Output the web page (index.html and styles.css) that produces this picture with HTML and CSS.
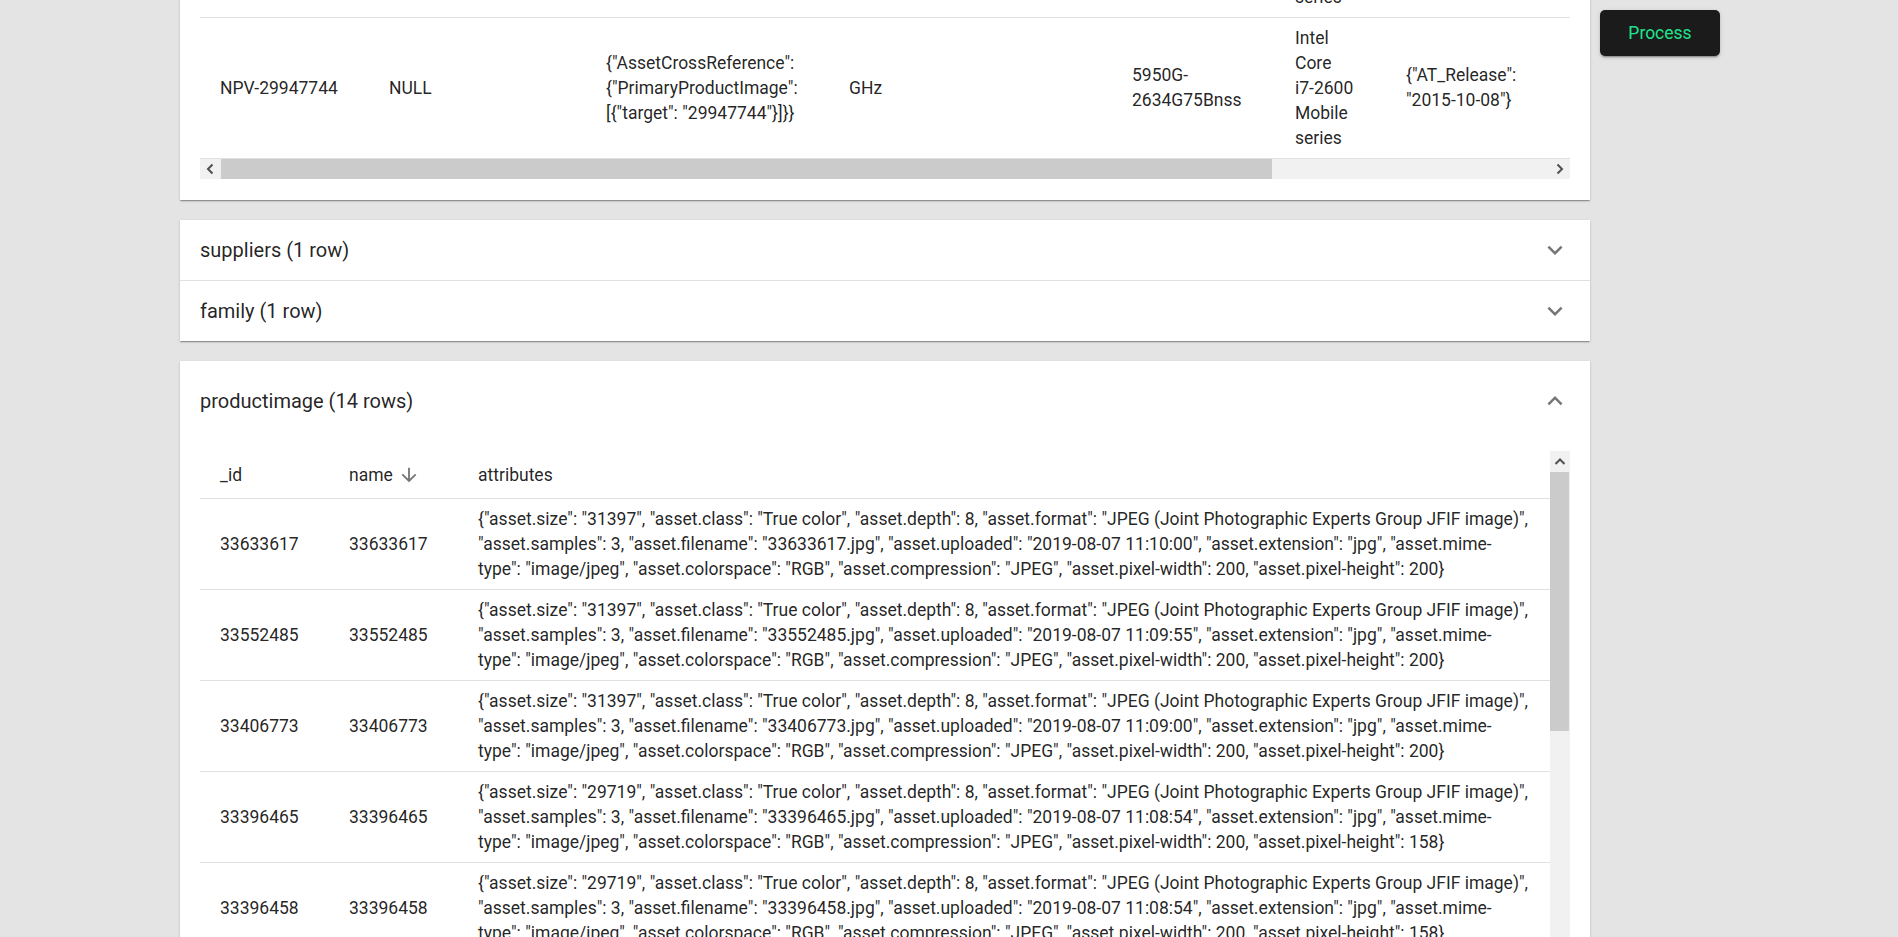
FILE: index.html
```html
<!DOCTYPE html>
<html lang="en">
<head>
<meta charset="utf-8">
<title>Import preview</title>
<link rel="stylesheet" href="styles.css">
</head>
<body>
<div class="page">
  <main class="main">
    <section class="card card-first">
      <div class="hwrap">
        <table class="wide">
          <colgroup>
            <col class="w1"><col class="w2"><col class="w3"><col class="w4"><col class="w5"><col class="w6"><col class="w7"><col class="w8">
          </colgroup>
          <tbody>
            <tr>
              <td></td>
              <td></td>
              <td></td>
              <td></td>
              <td></td>
              <td>Intel Core <span class="nb">i7-2600</span> Mobile series</td>
              <td></td>
              <td></td>
            </tr>
            <tr>
              <td>NPV-29947744</td>
              <td>NULL</td>
              <td>{"AssetCrossReference": {"PrimaryProductImage": [{"target": "29947744"}]}}</td>
              <td>GHz</td>
              <td>5950G-2634G75Bnss</td>
              <td>Intel Core <span class="nb">i7-2600</span> Mobile series</td>
              <td>{"AT_Release": "2015-10-08"}</td>
              <td></td>
            </tr>
          </tbody>
        </table>
      </div>
      <div class="hscroll">
        <div class="sb-btn"><svg width="21" height="20" viewBox="0 0 21 20"><polyline points="12.5,5.5 8,10 12.5,14.5" fill="none" stroke="#505050" stroke-width="2"/></svg></div>
        <div class="hs-thumb"></div>
        <div class="hs-rest"></div>
        <div class="sb-btn"><svg width="21" height="20" viewBox="0 0 21 20"><polyline points="8.5,5.5 13,10 8.5,14.5" fill="none" stroke="#505050" stroke-width="2"/></svg></div>
      </div>
    </section>

    <section class="card">
      <div class="panel">
        <span class="ptitle">suppliers (1 row)</span>
        <svg class="chev" viewBox="0 0 24 24"><path d="M16.59 8.59L12 13.17 7.41 8.59 6 10l6 6 6-6z"/></svg>
      </div>
      <div class="panel panel-divided">
        <span class="ptitle">family (1 row)</span>
        <svg class="chev" viewBox="0 0 24 24"><path d="M16.59 8.59L12 13.17 7.41 8.59 6 10l6 6 6-6z"/></svg>
      </div>
    </section>

    <section class="card">
      <div class="panel panel-open">
        <span class="ptitle">productimage (14 rows)</span>
        <svg class="chev" viewBox="0 0 24 24"><path d="M12 8l-6 6 1.41 1.41L12 10.83l4.59 4.58L18 14z"/></svg>
      </div>
      <div class="details">
        <div class="vwrap">
          <table class="imgs">
            <colgroup><col class="i1"><col class="i2"><col></colgroup>
            <thead>
              <tr>
                <th>_id</th>
                <th><span class="sort">name<svg class="arrow" viewBox="0 0 24 24"><path d="M20 12l-1.41-1.410L13 16.17V4h-2v12.17l-5.58-5.59L4 12l8 8 8-8z"/></svg></span></th>
                <th>attributes</th>
              </tr>
            </thead>
            <tbody>
              <tr>
                <td>33633617</td><td>33633617</td>
                <td class="attr">{"asset.size": "31397", "asset.class": "True color", "asset.depth": 8, "asset.format": "JPEG (Joint Photographic Experts Group JFIF image)", "asset.samples": 3, "asset.filename": "33633617.jpg", "asset.uploaded": "2019-08-07 11:10:00", "asset.extension": "jpg", "asset.mime-type": "image/jpeg", "asset.colorspace": "RGB", "asset.compression": "JPEG", "asset.pixel-width": 200, "asset.pixel-height": 200}</td>
              </tr>
              <tr>
                <td>33552485</td><td>33552485</td>
                <td class="attr">{"asset.size": "31397", "asset.class": "True color", "asset.depth": 8, "asset.format": "JPEG (Joint Photographic Experts Group JFIF image)", "asset.samples": 3, "asset.filename": "33552485.jpg", "asset.uploaded": "2019-08-07 11:09:55", "asset.extension": "jpg", "asset.mime-type": "image/jpeg", "asset.colorspace": "RGB", "asset.compression": "JPEG", "asset.pixel-width": 200, "asset.pixel-height": 200}</td>
              </tr>
              <tr>
                <td>33406773</td><td>33406773</td>
                <td class="attr">{"asset.size": "31397", "asset.class": "True color", "asset.depth": 8, "asset.format": "JPEG (Joint Photographic Experts Group JFIF image)", "asset.samples": 3, "asset.filename": "33406773.jpg", "asset.uploaded": "2019-08-07 11:09:00", "asset.extension": "jpg", "asset.mime-type": "image/jpeg", "asset.colorspace": "RGB", "asset.compression": "JPEG", "asset.pixel-width": 200, "asset.pixel-height": 200}</td>
              </tr>
              <tr>
                <td>33396465</td><td>33396465</td>
                <td class="attr">{"asset.size": "29719", "asset.class": "True color", "asset.depth": 8, "asset.format": "JPEG (Joint Photographic Experts Group JFIF image)", "asset.samples": 3, "asset.filename": "33396465.jpg", "asset.uploaded": "2019-08-07 11:08:54", "asset.extension": "jpg", "asset.mime-type": "image/jpeg", "asset.colorspace": "RGB", "asset.compression": "JPEG", "asset.pixel-width": 200, "asset.pixel-height": 158}</td>
              </tr>
              <tr>
                <td>33396458</td><td>33396458</td>
                <td class="attr">{"asset.size": "29719", "asset.class": "True color", "asset.depth": 8, "asset.format": "JPEG (Joint Photographic Experts Group JFIF image)", "asset.samples": 3, "asset.filename": "33396458.jpg", "asset.uploaded": "2019-08-07 11:08:54", "asset.extension": "jpg", "asset.mime-type": "image/jpeg", "asset.colorspace": "RGB", "asset.compression": "JPEG", "asset.pixel-width": 200, "asset.pixel-height": 158}</td>
              </tr>
            </tbody>
          </table>
          <div class="vscroll">
            <div class="sb-btn vbtn"><svg width="20" height="21" viewBox="0 0 20 21"><polyline points="5.5,13 10,8.5 14.5,13" fill="none" stroke="#505050" stroke-width="2"/></svg></div>
            <div class="vs-thumb"></div>
          </div>
        </div>
      </div>
    </section>
  </main>
  <aside class="side">
    <button class="process" type="button">Process</button>
  </aside>
</div>
</body>
</html>
```

FILE: styles.css
```css
html, body {
  margin: 0;
  padding: 0;
  overflow: hidden;
  background: #e4e4e4;
}

body {
  font-family: Roboto, "Liberation Sans", sans-serif;
  color: rgba(0, 0, 0, 0.87);
}

.page {
  display: flex;
  align-items: flex-start;
  gap: 10px;
  padding-left: 180px;
}

.main {
  width: 1410px;
  display: flex;
  flex-direction: column;
  gap: 20px;
}

.card {
  background: #fff;
  box-shadow: 0 2px 1px -1px rgba(0, 0, 0, 0.2), 0 1px 1px 0 rgba(0, 0, 0, 0.14), 0 1px 3px 0 rgba(0, 0, 0, 0.12);
}

.card-first {
  margin-top: -123px;
  padding: 0 20px 21px;
}

.hwrap {
  overflow: hidden;
}

table {
  border-collapse: collapse;
  table-layout: fixed;
}

td, th {
  font-size: 17.5px;
  line-height: 25px;
  font-weight: 400;
  text-align: left;
  vertical-align: middle;
  padding: 7.5px 30px 7.5px 20px;
  border-bottom: 1px solid #e0e0e0;
}

.nb {
  white-space: nowrap;
}

.wide {
  width: 1733px;
}

.w1 { width: 169px; }
.w2 { width: 217px; }
.w3 { width: 243px; }
.w4 { width: 283px; }
.w5 { width: 163px; }
.w6 { width: 111px; }
.w7 { width: 180px; }
.w8 { width: 367px; }

.hscroll {
  display: flex;
  height: 20px;
  background: #f1f1f1;
}

.sb-btn {
  width: 21px;
  flex: none;
  display: flex;
  align-items: center;
  justify-content: center;
}

.hs-thumb {
  width: 1051px;
  background: #cbcbcb;
}

.hs-rest {
  flex: 1;
}

.panel {
  height: 60px;
  padding: 0 20px;
  display: flex;
  align-items: center;
  justify-content: space-between;
}

.panel-divided {
  border-top: 1px solid #e0e0e0;
}

.panel-open {
  height: 80px;
}

.ptitle {
  font-size: 20px;
  line-height: 30px;
}

.chev {
  width: 30px;
  height: 30px;
  fill: rgba(0, 0, 0, 0.54);
}

.details {
  padding: 10px 20px 0;
}

.vwrap {
  display: flex;
  align-items: stretch;
}

.imgs {
  flex: 1;
  width: 1350px;
}

.i1 { width: 129px; }
.i2 { width: 129px; }

.imgs th {
  line-height: 30px;
  padding-top: 9px;
  padding-bottom: 8px;
}

.sort {
  display: inline-flex;
  align-items: center;
}

.arrow {
  width: 22px;
  height: 22px;
  margin-left: 5px;
  fill: rgba(0, 0, 0, 0.54);
}

.imgs td.attr {
  padding-right: 16px;
}

.vscroll {
  width: 20px;
  flex: none;
  background: #f1f1f1;
  display: flex;
  flex-direction: column;
}

.vbtn {
  width: 20px;
  height: 21px;
}

.vs-thumb {
  height: 259px;
  margin-right: 1px;
  background: #cbcbcb;
}

.side {
  padding-top: 10px;
}

.process {
  width: 120px;
  height: 46px;
  border: none;
  border-radius: 5px;
  background: #1b1b1b;
  color: #20e38d;
  font-family: Roboto, "Liberation Sans", sans-serif;
  font-size: 17.5px;
  box-shadow: 0 3px 1px -2px rgba(0, 0, 0, 0.2), 0 2px 2px 0 rgba(0, 0, 0, 0.14), 0 1px 5px 0 rgba(0, 0, 0, 0.12);
}
```
